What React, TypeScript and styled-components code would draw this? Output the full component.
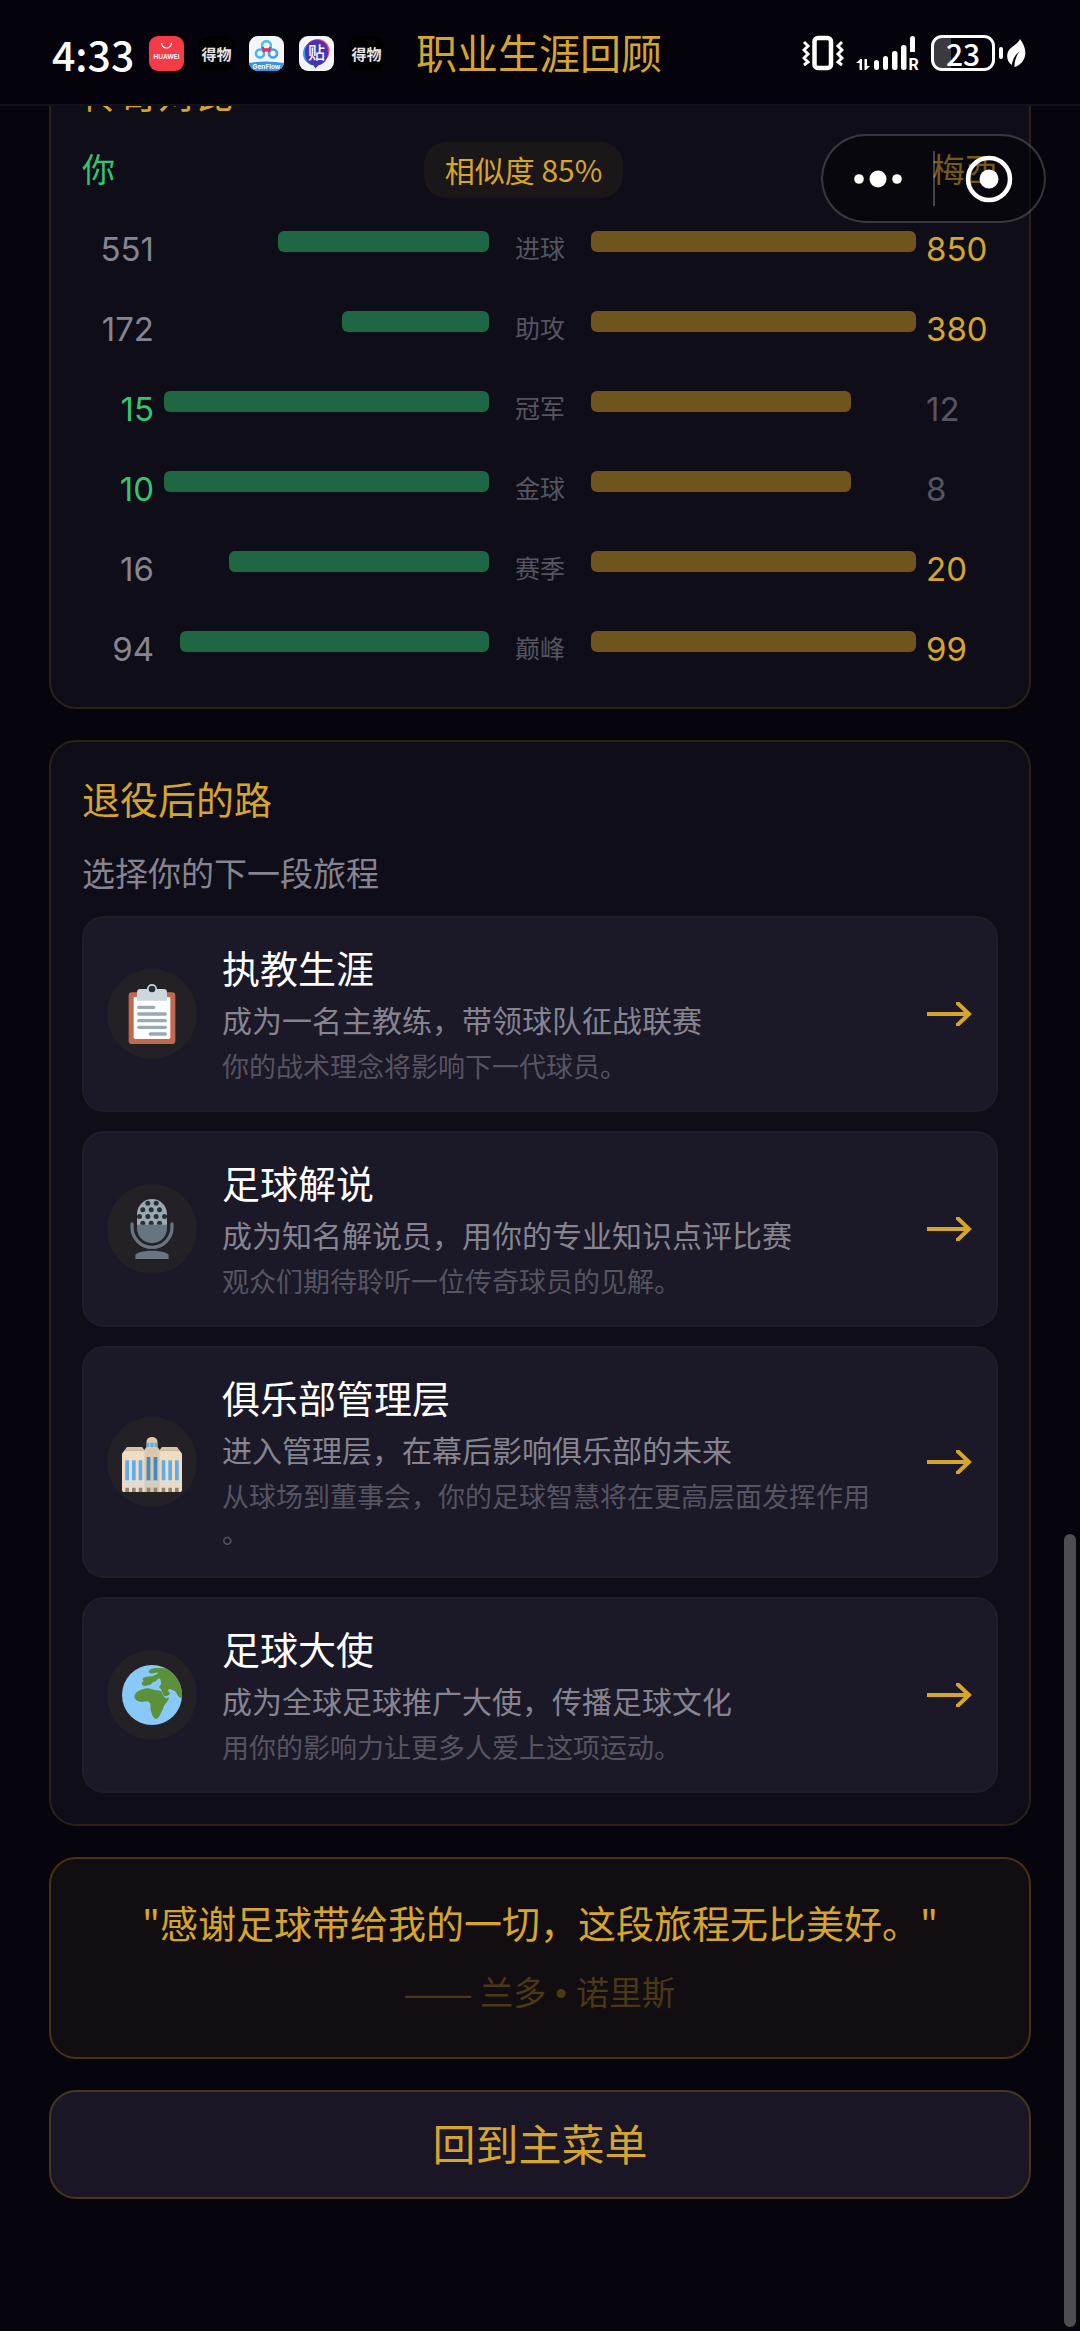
import React from "react";
import styled, { createGlobalStyle } from "styled-components";

const GlobalStyle = createGlobalStyle`
  * {
    box-sizing: border-box;
  }
  body {
    margin: 0;
    background: #06040d;
    color: #fff;
    font-family: "Noto Sans CJK SC", "Noto Sans", sans-serif;
  }
  button {
    font-family: inherit;
    color: inherit;
    cursor: pointer;
  }
  h1, h2, h3, p {
    margin: 0;
    font-weight: 400;
  }
`;

const gold = "#d6a52c";
const green = "#34c56f";
const muted = "#868490";
const faint = "#565461";

const Page = styled.div`
  min-height: 100vh;
`;

/* ---------- header ---------- */

const Header = styled.header`
  position: sticky;
  top: 0;
  z-index: 2;
  height: 106px;
  padding: 2px 54px 0 52px;
  display: grid;
  grid-template-columns: 1fr auto 1fr;
  align-items: center;
  background: #04030b;
  border-bottom: 2px solid #13111c;
`;

const StatusLeft = styled.div`
  display: flex;
  align-items: center;
  gap: 15px;
`;

const Time = styled.span`
  font-size: 41px;
  line-height: 44px;
  font-weight: 500;
`;

const AppIcon = styled.svg`
  width: 35px;
  height: 35px;
  flex: none;
`;

const PageTitle = styled.h1`
  padding-bottom: 4px;
  font-size: 41px;
  line-height: 50px;
  color: ${gold};
`;

const StatusRight = styled.div`
  display: flex;
  align-items: center;
  justify-content: flex-end;
  gap: 12px;
`;

const SignalSvg = styled.svg`
  width: 63px;
  height: 36px;
  overflow: visible;
`;

const BatteryGroup = styled.div`
  display: flex;
  align-items: center;
  gap: 4px;
`;

const Battery = styled.div`
  width: 64px;
  height: 36px;
  border: 3px solid #fff;
  border-radius: 11px;
  background: linear-gradient(90deg, #3b3a42 17px, transparent 17px);
  display: flex;
  align-items: center;
  justify-content: center;
  font-size: 30px;
  line-height: 30px;
  font-weight: 500;
`;

const BatteryTip = styled.span`
  width: 4px;
  height: 12px;
  border-radius: 2px;
  background: #fff;
`;

/* ---------- floating capsule ---------- */

const Capsule = styled.div`
  position: fixed;
  z-index: 3;
  top: 134px;
  right: 34px;
  width: 225px;
  height: 89px;
  display: grid;
  grid-template-columns: 1fr 2px 1fr;
  align-items: center;
  background: rgba(0, 0, 0, 0.45);
  border: 2px solid rgba(255, 255, 255, 0.2);
  border-radius: 45px;
`;

const CapsuleButton = styled.button`
  display: flex;
  align-items: center;
  justify-content: center;
  height: 100%;
  padding: 0;
  background: none;
  border: 0;
`;

const CapsuleDivider = styled.span`
  height: 55px;
  background: rgba(255, 255, 255, 0.25);
`;

/* ---------- cards ---------- */

const Main = styled.main`
  overflow: hidden;
  padding: 0 49px 133px;
  display: flex;
  flex-direction: column;
  gap: 31px;
`;

const Card = styled.section`
  padding: 31px;
  background: #0f0d18;
  border: 2px solid #2a2119;
  border-radius: 27px;
`;

/* scrolled part of the way under the header */
const CompareCard = styled(Card)`
  margin-top: -72px;
`;

const CardTitle = styled.h2`
  margin-bottom: 25px;
  font-size: 38px;
  line-height: 50px;
  color: ${gold};
`;

const Versus = styled.div`
  display: flex;
  align-items: center;
  justify-content: space-between;
  margin-bottom: 33px;
`;

const Player = styled.span<{ $rival?: boolean }>`
  padding-bottom: 4px;
  font-size: 33px;
  line-height: 44px;
  color: ${(p) => (p.$rival ? gold : green)};
`;

const Similarity = styled.span`
  padding: 0 21px 2px;
  font-size: 30px;
  line-height: 54px;
  color: ${gold};
  background: #1b1618;
  border-radius: 22px;
`;

const Stats = styled.div`
  display: flex;
  flex-direction: column;
  gap: 35px;
`;

const StatRow = styled.div`
  display: grid;
  grid-template-columns: 72px 1fr 82px 1fr 72px;
  column-gap: 10px;
  padding-bottom: 9px;
`;

const StatValue = styled.span<{ $color: string; $right?: boolean }>`
  font-family: Inter, "Noto Sans CJK SC", sans-serif;
  font-size: 33px;
  line-height: 36px;
  color: ${(p) => p.$color};
  text-align: ${(p) => (p.$right ? "right" : "left")};
`;

const StatLabel = styled.span`
  font-size: 25px;
  line-height: 32px;
  color: ${faint};
  text-align: center;
`;

const Track = styled.div<{ $right?: boolean }>`
  display: flex;
  justify-content: ${(p) => (p.$right ? "flex-end" : "flex-start")};
`;

const Bar = styled.div<{ $color: string }>`
  height: 21px;
  border-radius: 6px;
  background: ${(p) => p.$color};
`;

const Subtitle = styled.p`
  margin-bottom: 20px;
  font-size: 33px;
  line-height: 48px;
  color: ${muted};
`;

const PathList = styled.div`
  display: flex;
  flex-direction: column;
  gap: 19px;
`;

const PathButton = styled.button`
  display: flex;
  align-items: center;
  gap: 25px;
  width: 100%;
  padding: 25px 24px 26px 23px;
  text-align: left;
  background: #1b1827;
  border: 2px solid #1f1c2b;
  border-radius: 22px;
`;

const IconCircle = styled.span`
  flex: none;
  width: 90px;
  height: 90px;
  border-radius: 50%;
  background: #232026;
  display: flex;
  align-items: center;
  justify-content: center;
`;

const Emoji = styled.svg`
  width: 60px;
  height: 60px;
`;

const PathText = styled.span`
  flex: 1;
  min-width: 0;
  padding-right: 8px;
  display: flex;
  flex-direction: column;
`;

const PathName = styled.span`
  font-size: 38px;
  line-height: 48px;
  color: #fff;
`;

const PathDesc = styled.span`
  margin-top: 7px;
  font-size: 30px;
  line-height: 42px;
  color: ${muted};
`;

const PathHint = styled.span`
  margin-top: 8px;
  font-size: 27px;
  line-height: 36px;
  color: ${faint};
  line-break: anywhere;
`;

const Arrow = styled.svg`
  flex: none;
  width: 45px;
  height: 24px;
`;

const QuoteCard = styled(Card)`
  padding: 41px 31px;
  text-align: center;
  background: #120d10;
  border-color: #453314;
`;

const Quote = styled.p`
  margin-bottom: 28px;
  font-size: 38px;
  line-height: 44px;
  color: ${gold};
`;

const Author = styled.p`
  font-family: "Liberation Sans", "Noto Sans CJK SC", sans-serif;
  font-size: 33px;
  line-height: 44px;
  color: #4a3816;
`;

const MenuButton = styled.button`
  height: 109px;
  padding: 0 0 5px;
  font-size: 43px;
  line-height: 60px;
  color: ${gold};
  background: #1a1626;
  border: 2px solid #463622;
  border-radius: 27px;
`;

const ScrollThumb = styled.div`
  position: fixed;
  right: 4px;
  bottom: 4px;
  width: 12px;
  height: 34vh;
  border-radius: 6px;
  background: #4e4d50;
`;

/* ---------- drawings ---------- */

const HuaweiIcon = () => (
  <AppIcon viewBox="0 0 35 35">
    <rect width="35" height="35" rx="9" fill="#f63b48" />
    <path d="M12.5 7a5 5 0 0 0 10 0" fill="none" stroke="#fff" strokeWidth="1.2" />
    <text x="17.5" y="23" textAnchor="middle" fontSize="6.5" fontWeight="600" fill="#fff" fontFamily="Inter, sans-serif">
      HUAWEI
    </text>
  </AppIcon>
);

const DewuIcon = () => (
  <AppIcon viewBox="0 0 35 35">
    <rect width="35" height="35" rx="9" fill="#000" />
    <text x="17.5" y="23.5" textAnchor="middle" fontSize="15" fontWeight="700" fill="#e4e4e4">
      得物
    </text>
  </AppIcon>
);

const GenFlowIcon = () => (
  <AppIcon viewBox="0 0 35 35">
    <clipPath id="flow">
      <rect width="35" height="35" rx="9" />
    </clipPath>
    <g clipPath="url(#flow)">
      <rect width="35" height="35" fill="#f4f6fa" />
      <g fill="none" strokeWidth="2.6">
        <circle cx="11" cy="17.5" r="4" stroke="#45b6ee" />
        <circle cx="24" cy="17.5" r="4" stroke="#4d9fe8" />
        <circle cx="17.5" cy="9.5" r="4.4" stroke="#4cc3e8" />
        <path d="M13.3 11.200a4.400 4.400 0 0 0 8.400 0M13.800 15.600l3.700-2 3.700 2" stroke="#e0315f" />
      </g>
      <path d="M0 27q17.5-3 35 0v8H0z" fill="#3795e6" />
      <text x="17.5" y="33" textAnchor="middle" fontSize="6.5" fontWeight="700" fill="#fff" fontFamily="Inter, sans-serif">
        GenFlow
      </text>
    </g>
  </AppIcon>
);

const TieIcon = () => (
  <AppIcon viewBox="0 0 35 35">
    <rect width="35" height="35" rx="9" fill="#f4f4fa" />
    <circle cx="18.5" cy="15" r="12" fill="#e2457e" />
    <circle cx="16" cy="17.5" r="12" fill="#2f9bea" />
    <path d="M17.5 4C25 4 29 9 29 16s-4 12.500-9.500 13.200L16.500 32.500l-2-3.300C9 28.500 6 23 6 16.500S10 4 17.500 4z" fill="#4a32b4" />
    <text x="17.5" y="22.5" textAnchor="middle" fontSize="17" fontWeight="500" fill="#fff">
      贴
    </text>
  </AppIcon>
);

const VibrateIcon = () => (
  <svg width="42" height="36" viewBox="0 0 42 36" fill="none" stroke="#fff">
    <rect x="12.5" y="3" width="16.5" height="30" rx="3.5" strokeWidth="4.5" />
    <path
      d="M2 7l4 4-4 4 4 4-4 4 4 4-4 3M40 7l-4 4 4 4-4 4 4 4-4 4 4 3"
      strokeWidth="3"
    />
  </svg>
);

const SignalIcon = () => (
  <SignalSvg viewBox="0 0 63 36" fill="#fff">
    <path d="M0 28l4.500-4h1.500v11H3.500v-7zM8.500 24H11v7h3l-4 4H8.500z" />
    <rect x="18" y="25" width="5" height="10" rx="2.5" />
    <rect x="27" y="21" width="5" height="14" rx="2.5" />
    <rect x="36" y="16" width="5.5" height="19" rx="2.5" />
    <rect x="45" y="10" width="5.5" height="25" rx="2.5" />
    <path d="M54 3.500a2.500 2.500 0 0 1 5 0V17h-5z" />
    <text x="52.5" y="34.5" fontSize="16" fontWeight="700" fontFamily="Roboto, sans-serif">
      R
    </text>
  </SignalSvg>
);

const LeafIcon = () => (
  <svg width="19" height="28" viewBox="0 0 19 28" fill="#fff">
    <path d="M13 0c3.500 5 6 10 5.200 15.500C17.500 22 12.500 27 7.500 28c-.2-5 1.500-11 5-15.500C8 16 5.500 20.500 4.800 26 1 23.500-.6 19 .5 14.500 2 8 10 6.500 13 0z" />
  </svg>
);

const ClipboardEmoji = () => (
  <Emoji viewBox="0 0 36 36">
    <path fill="#c1694f" d="M32 34a2 2 0 0 1-2 2H6a2 2 0 0 1-2-2V7a2 2 0 0 1 2-2h24a2 2 0 0 1 2 2z" />
    <path fill="#fff" d="M29 32a1 1 0 0 1-1 1H8a1 1 0 0 1-1-1V8h22z" />
    <path fill="#ccd6dd" d="M25 3h-4a3 3 0 0 0-6 0h-4a2 2 0 0 0-2 2v5h18V5a2 2 0 0 0-2-2z" />
    <circle fill="#292f33" cx="18" cy="3" r="2" />
    <g fill="#99aab5">
      <rect x="9" y="13" width="11" height="2" rx="1" />
      <rect x="9" y="17" width="18" height="2" rx="1" />
      <rect x="9" y="21" width="18" height="2" rx="1" />
      <rect x="9" y="25" width="18" height="2" rx="1" />
      <rect x="16" y="29" width="11" height="2" rx="1" />
    </g>
  </Emoji>
);

const micDots = [
  [15.5, 2.5], [20.5, 2.5],
  [12.5, 6.5], [17.5, 6.5], [22.5, 6.5],
  [10.5, 10.5], [15.5, 10.5], [20.5, 10.5], [25.5, 10.5],
  [12.5, 14.5], [17.5, 14.5], [22.5, 14.5],
];

const MicEmoji = () => (
  <Emoji viewBox="0 0 36 36">
    <clipPath id="grille">
      <path d="M9 9a9 9 0 0 1 18 0v6.500H9z" />
    </clipPath>
    <path fill="#66757f" d="M9 15h18v2.500a9 9 0 0 1-18 0z" />
    <g clipPath="url(#grille)">
      <rect x="9" y="0" width="18" height="16" fill="#99aab5" />
      {micDots.map(([x, y]) => (
        <circle key={`${x}-${y}`} cx={x} cy={y} r="1.5" fill="#292f33" />
      ))}
    </g>
    <path
      d="M6 15v2a12 12 0 0 0 24 0v-2"
      fill="none"
      stroke="#66757f"
      strokeWidth="2"
      strokeLinecap="round"
    />
    <path fill="#66757f" d="M8 36v-2c0-2 5-3 10-3s10 1 10 3v2z" />
  </Emoji>
);

const BuildingEmoji = () => (
  <Emoji viewBox="0 0 36 36">
    <path fill="#d9c3a5" d="M3 9h9l1.500 2h-12zM24 9h9l1.500 2h-12z" />
    <path fill="#f0dcc0" d="M0 13l1.500-2H14v25H1a1 1 0 0 1-1-1zM36 13l-1.500-2H22v25h13a1 1 0 0 0 1-1z" />
    <path fill="#d9c8ab" d="M13.500 10.500l1.200-1.500v-3c0-1.500 1-3 3.300-3s3.300 1.500 3.300 3v3l1.200 1.500V36h-9z" />
    <path fill="#5dadec" d="M14.700 6.500h6.600V9h-6.600z" />
    <path fill="#d9c8ab" d="M16.300 6.500h.7V9h-.7zM19 6.500h.7V9H19z" />
    <path fill="#5dadec" d="M2 17h2.200v12H2zM6 17h2.200v12H6zM10 17h2.200v12H10zM23.800 17H26v12h-2.200zM27.800 17H30v12h-2.200zM31.800 17H34v12h-2.200z" />
    <path fill="#4289c1" d="M14.800 15h2.200v14h-2.200zM19 15h2.200v14H19z" />
    <path fill="#b9dff5" d="M0 30h36v.8H0zM0 32h36v.6H0z" opacity=".7" />
    <path fill="#8f8473" d="M2 33.500h2.200V36H2zM6 33.500h2.200V36H6zM10 33.500h2.200V36H10zM14.800 33.500h2.200V36h-2.200zM19 33.500h2.200V36H19zM23.800 33.500H26V36h-2.200zM27.800 33.500H30V36h-2.200zM31.800 33.500H34V36h-2.200z" />
  </Emoji>
);

const GlobeEmoji = () => (
  <Emoji viewBox="0 0 36 36">
    <clipPath id="globe">
      <circle cx="18" cy="18" r="18" />
    </clipPath>
    <circle cx="18" cy="18" r="18" fill="#88c9f9" />
    <g clipPath="url(#globe)" fill="#5c913b">
      <path d="M16 3.500c1.500-1.500 4-2 6-1.500 2-.5 4 .5 6 0L36 8v12l-2-1c-1-1-1.500-3-2.500-3.500-1.500-.5-2.500-1.500-3.500-1-.8 1 .5 2 1 2.500-.8 1.500-2.500 2-3.800 1.500-1-1-1.200-3.500-2.200-4.500-1 0-.5-2 .5-2.500-.2-1.500 0-2.500-1-3.500-1.500 0-1.500 2-3 2-1.500 0-1.500 1.500-3 2-1.500.2-2.500.8-3.500.5-1.500-.5-1.500-2 0-3-.8-.5-.8-1.800.3-2 2-.8 4-.3 5.700-1 .5-1 2.500-.5 2.500-2-1.500-.2-3 1-4.500.5-1-.3-1.500-1-.5-1.500z" />
      <path d="M12.500 14.500c2-.8 4-.7 5.500 0 2 .8 4 .2 5.500 1.200.8 1.500 1.200 3 2.500 4 1 .3 1.500-.2 2.300 0-.5 2-2.300 3.300-3.300 5.300-.5 2-1.500 3-2 4.500-.5 1.300-1.500 3-3 2.700-1.700-.7-2.200-3-2.700-5-.5-2 .3-3-.8-4.700-1-1.200-3-.5-4.500-.3-2-.2-3.800-.7-4.500-2.500-.5-2 1.500-4.500 5-5.200z" />
    </g>
  </Emoji>
);

/* ---------- data ---------- */

const stats = [
  { label: "进球", you: 551, rival: 850 },
  { label: "助攻", you: 172, rival: 380 },
  { label: "冠军", you: 15, rival: 12 },
  { label: "金球", you: 10, rival: 8 },
  { label: "赛季", you: 16, rival: 20 },
  { label: "巅峰", you: 94, rival: 99 },
];

const paths = [
  {
    name: "执教生涯",
    desc: "成为一名主教练，带领球队征战联赛",
    hint: "你的战术理念将影响下一代球员。",
    icon: <ClipboardEmoji />,
  },
  {
    name: "足球解说",
    desc: "成为知名解说员，用你的专业知识点评比赛",
    hint: "观众们期待聆听一位传奇球员的见解。",
    icon: <MicEmoji />,
  },
  {
    name: "俱乐部管理层",
    desc: "进入管理层，在幕后影响俱乐部的未来",
    hint: "从球场到董事会，你的足球智慧将在更高层面发挥作用。",
    icon: <BuildingEmoji />,
  },
  {
    name: "足球大使",
    desc: "成为全球足球推广大使，传播足球文化",
    hint: "用你的影响力让更多人爱上这项运动。",
    icon: <GlobeEmoji />,
  },
];

interface IStat {
  label: string;
  you: number;
  rival: number;
}

const StatLine: React.FC<IStat> = ({ label, you, rival }) => {
  const max = Math.max(you, rival);
  return (
    <StatRow>
      <StatValue $right $color={you > rival ? green : muted}>
        {you}
      </StatValue>
      <Track $right>
        <Bar $color="#1f6742" style={{ width: `${(you / max) * 100}%` }} />
      </Track>
      <StatLabel>{label}</StatLabel>
      <Track>
        <Bar $color="#6f541e" style={{ width: `${(rival / max) * 100}%` }} />
      </Track>
      <StatValue $color={rival > you ? gold : faint}>{rival}</StatValue>
    </StatRow>
  );
};

export default function App() {
  return (
    <Page>
      <GlobalStyle />
      <Header>
        <StatusLeft>
          <Time>4:33</Time>
          <HuaweiIcon />
          <DewuIcon />
          <GenFlowIcon />
          <TieIcon />
          <DewuIcon />
        </StatusLeft>
        <PageTitle>职业生涯回顾</PageTitle>
        <StatusRight>
          <VibrateIcon />
          <SignalIcon />
          <BatteryGroup>
            <Battery>23</Battery>
            <BatteryTip />
            <LeafIcon />
          </BatteryGroup>
        </StatusRight>
      </Header>

      <Capsule>
        <CapsuleButton aria-label="更多">
          <svg width="48" height="20" viewBox="0 0 48 20" fill="#fff">
            <circle cx="5" cy="10" r="4.800" />
            <circle cx="24" cy="10" r="8.500" />
            <circle cx="43" cy="10" r="4.800" />
          </svg>
        </CapsuleButton>
        <CapsuleDivider />
        <CapsuleButton aria-label="关闭">
          <svg width="48" height="48" viewBox="0 0 48 48">
            <circle cx="24" cy="24" r="21" fill="none" stroke="#fff" strokeWidth="4.500" />
            <circle cx="24" cy="24" r="9.500" fill="#fff" />
          </svg>
        </CapsuleButton>
      </Capsule>

      <Main>
        <CompareCard>
          <CardTitle>传奇对比</CardTitle>
          <Versus>
            <Player>你</Player>
            <Similarity>相似度 85%</Similarity>
            <Player $rival>梅西</Player>
          </Versus>
          <Stats>
            {stats.map((s) => (
              <StatLine key={s.label} {...s} />
            ))}
          </Stats>
        </CompareCard>

        <Card>
          <CardTitle>退役后的路</CardTitle>
          <Subtitle>选择你的下一段旅程</Subtitle>
          <PathList>
            {paths.map((p) => (
              <PathButton key={p.name} type="button">
                <IconCircle>{p.icon}</IconCircle>
                <PathText>
                  <PathName>{p.name}</PathName>
                  <PathDesc>{p.desc}</PathDesc>
                  <PathHint>{p.hint}</PathHint>
                </PathText>
                <Arrow viewBox="0 0 45 24" fill="none" stroke={gold} strokeWidth="4">
                  <path d="M0 12h42M29 1h1.500L42 12 30.500 23H29" />
                </Arrow>
              </PathButton>
            ))}
          </PathList>
        </Card>

        <QuoteCard>
          <Quote>"感谢足球带给我的一切，这段旅程无比美好。"</Quote>
          <Author>—— 兰多 • 诺里斯</Author>
        </QuoteCard>

        <MenuButton type="button">回到主菜单</MenuButton>
      </Main>
      <ScrollThumb />
    </Page>
  );
}
